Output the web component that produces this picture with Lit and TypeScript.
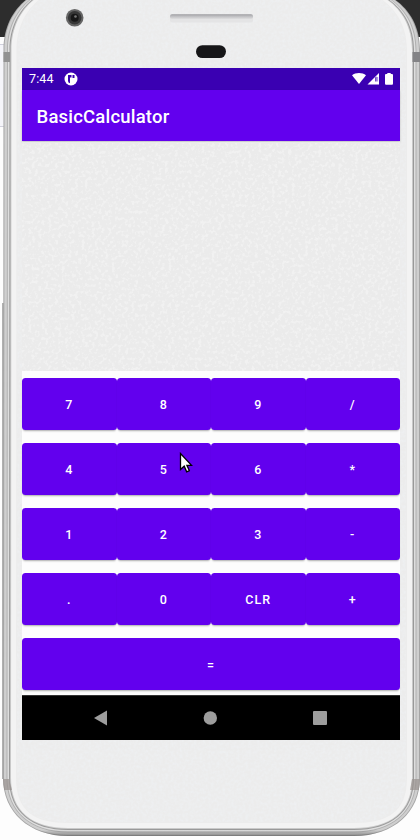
import { LitElement, html, css, svg } from "lit";
import { customElement, property } from "lit/decorators.js";

@customElement("phone-frame")
class PhoneFrame extends LitElement {
  static styles = css`
    :host { display: block; }
    svg { display: block; }
  `;
  render() {
    const outline = (i: number) =>
      `M${3.5 + i} 50 C${3.5 + i} 26 ${14 + i} 9 ${27 + i} ${-1} L${27 + i} -20 H${394 - i} V-1 C${409 - i} 9 ${420 - i} 26 ${420 - i} 50 V778 C${420 - i} 812 ${394 - i * 0.5} ${836 - i} 354 ${836 - i} H68 C${29 + i * 0.5} ${836 - i} ${3 + i} 812 ${3 + i} 778 Z`;
    const layers: [number, string][] = [
      [0, "#a5a5a5"], [1, "#cfcfcf"], [3.5, "#b0b0b0"], [4.5, "#dedede"],
      [6, "#999999"], [7, "#c9c9c9"], [8, "#f3f3f3"], [13, "#ececec"],
    ];
    return html`<svg width="420" height="840" viewBox="0 0 420 840">
      <defs>
        <filter id="grain" x="0" y="0" width="100%" height="100%">
          <feTurbulence type="fractalNoise" baseFrequency="0.35" numOctaves="2" seed="4" />
          <feColorMatrix values="0 0 0 0 0.86  0 0 0 0 0.88  0 0 0 0 0.9  1.6 0 0 0 -0.6" />
          <feComposite in2="SourceGraphic" operator="in" />
        </filter>
        <linearGradient id="slot" x1="0" y1="0" x2="0" y2="1">
          <stop offset="0" stop-color="#9c9ca0" />
          <stop offset=".4" stop-color="#bcbcbf" />
          <stop offset="1" stop-color="#dededf" />
        </linearGradient>
        <linearGradient id="foot" x1="0" y1="0" x2="0" y2="1">
          <stop offset="0" stop-color="#666" stop-opacity="0" />
          <stop offset="1" stop-color="#666" stop-opacity=".8" />
        </linearGradient>
        <clipPath id="body"><path d=${outline(0)} /></clipPath>
      </defs>
      <rect width="420" height="840" fill="#fdfdfd" />
      <rect width="420" height="37" fill="#2d2d2d" />
      <rect y="44" width="8" height="83" fill="#f5f5fa" />
      <path d="M0 44.5H8M0 126.5H8" stroke="#d0d0dc" />
      <rect x="2" y="303" width="3" height="476" fill="#b0b0b0" />
      ${layers.map(([i, c]) => svg`<path d=${outline(i)} fill=${c} />`)}
      <g clip-path="url(#body)">
        <rect x="3" y="52" width="7" height="10" fill="#929292" />
        <rect x="412.500" y="52" width="7.500" height="10" fill="#838386" />
        <path d="M2 779H9L12 790H2Z" fill="#98928f" opacity=".7" />
        <path d="M412 779H420V790H410Z" fill="#98928f" opacity=".7" />
        <rect x="28" y="830" width="365" height="7" fill="url(#foot)" />
      </g>
      <path d=${outline(14)} fill="#ececec" filter="url(#grain)" />
      <circle cx="74.700" cy="17.700" r="8.800" fill="#656565" />
      <circle cx="74.700" cy="17.700" r="6.800" fill="#373737" />
      <circle cx="74.700" cy="17.700" r="4" fill="#171717" />
      <circle cx="75.500" cy="16.500" r="1.300" fill="#777" />
      <rect x="170" y="14.500" width="83" height="8" rx="2" fill="#e4e4e5" />
      <rect x="170" y="14.200" width="83" height="4.800" rx="2" fill="url(#slot)" />
      <rect x="196" y="45.200" width="30" height="12.800" rx="6.400" fill="#161618" />
    </svg>`;
  }
}

@customElement("calc-key")
class CalcKey extends LitElement {
  @property() label = "";
  static styles = css`
    :host { display: block; min-width: 0; }
    button {
      display: block; width: 100%; height: 52px; padding: 0; border: 0;
      border-radius: 3.5px; background: #6200ee; color: #fff;
      font: 500 12.5px/53px Roboto, sans-serif; letter-spacing: 1.1px;
      box-shadow: 0 2px 2px -1px rgba(0, 0, 0, .32);
    }
  `;
  render() {
    return html`<button>${this.label}</button>`;
  }
}

@customElement("app-root")
class AppRoot extends LitElement {
  static styles = css`
    :host {
      display: block; position: relative; width: 420px; height: 840px;
      overflow: hidden; font-family: Roboto, sans-serif; color: #fff;
    }
    phone-frame { position: absolute; inset: 0; }
    .stage { position: relative; padding: 68px 20px 0 22px; }
    .screen { display: flex; flex-direction: column; height: 672px; }
    .status {
      height: 22px; box-sizing: border-box; display: flex; align-items: center;
      padding: 0 6px 0 7px; background: #3a00b2;
    }
    .time { font-size: 12.5px; line-height: 22px; letter-spacing: .1px; width: 35px; }
    .spacer { flex: 1; }
    .appbar {
      height: 51px; box-sizing: border-box; padding-left: 14.500px; background: #6200ee;
      font-size: 18.5px; line-height: 54px; font-weight: 500; letter-spacing: .2px;
      box-shadow: 0 1px 2px rgba(0, 0, 0, .2);
    }
    .display { height: 230px; }
    .keys {
      height: 324px; box-sizing: border-box; padding-top: 7px; background: #fdfdfd;
      display: grid; grid-template-columns: repeat(4, 1fr); grid-auto-rows: 52px; row-gap: 13px;
    }
    .wide { grid-column: span 4; }
    .nav {
      height: 45px; box-sizing: border-box; display: flex; align-items: center;
      justify-content: space-between; padding: 0 73px 1px 71px; background: #000;
      border-top: 1px solid #333;
    }
    svg { display: block; }
    .cursor { position: absolute; left: 179px; top: 452px; }
  `;
  render() {
    const keys = ["7", "8", "9", "/", "4", "5", "6", "*", "1", "2", "3", "-", ".", "0", "CLR", "+"];
    return html`
      <phone-frame></phone-frame>
      <div class="stage"><div class="screen">
        <div class="status">
          <span class="time">7:44</span>
          <svg width="14" height="14" viewBox="0 0 14 14">
            <circle cx="7" cy="7" r="6.500" fill="#fff" />
            <path d="M4 3H7.500V5.500H6V11.200Q4 10.800 4 9Z" fill="#3a00b2" />
            <path d="M8.500 3H10.500V6H8.500Z" fill="#3a00b2" />
          </svg>
          <span class="spacer"></span>
          <svg width="44" height="14" viewBox="350 0 44 14">
            <path d="M352 3.200C355.500 .3 362.500 .3 366 3.200L359 12Z" fill="#fff" />
            <path d="M379 1V12.500H367.500Z" fill="#fff" />
            <path d="M375.300 5.500L376.500 4.500V9.500H375.300Z" fill="#3a00b2" />
            <path d="M377.300 5H378.100V9.500H377.300Z" fill="#8c6bd8" />
            <path d="M387.300 1H390.700V2H392Q393 2 393 3V11.500Q393 12.700 392 12.700H386Q385 12.700 385 11.500V3Q385 2 386 2H387.300Z" fill="#fff" />
          </svg>
        </div>
        <div class="appbar">BasicCalculator</div>
        <div class="display">
          <svg width="378" height="230">
            <defs><filter id="weave" x="0" y="0" width="100%" height="100%">
              <feTurbulence type="fractalNoise" baseFrequency="0.3" numOctaves="2" seed="9" />
              <feColorMatrix values="0 0 0 0 0.97  0 0 0 0 0.97  0 0 0 0 0.97  5 0 0 0 -2.5" />
            </filter></defs>
            <rect y="1" width="378" height="229" fill="#ebebeb" />
            <rect y="2" width="378" height="228" filter="url(#weave)" opacity=".4" />
          </svg>
        </div>
        <div class="keys">
          ${keys.map((k) => html`<calc-key .label=${k}></calc-key>`)}
          <calc-key class="wide" .label=${"="}></calc-key>
        </div>
        <div class="nav">
          <svg width="14" height="16" viewBox="0 0 14 16"><path d="M1 8L14 .5V15.500Z" fill="#9d9d9d" /></svg>
          <svg width="14" height="14" viewBox="0 0 14 14"><circle cx="7.300" cy="7" r="6.700" fill="#9d9d9d" /></svg>
          <svg width="14" height="14" viewBox="0 0 14 14"><rect width="14" height="14" rx="1" fill="#9d9d9d" /></svg>
        </div>
      </div></div>
      <svg class="cursor" width="14" height="22" viewBox="0 0 14 22">
        <path d="M1.500 1.500V17.500L5.200 14.200L7.700 19.800L10.300 18.600L7.900 13.300H12.500Z" fill="#fff" stroke="#000" stroke-width="1.300" />
      </svg>
    `;
  }
}
